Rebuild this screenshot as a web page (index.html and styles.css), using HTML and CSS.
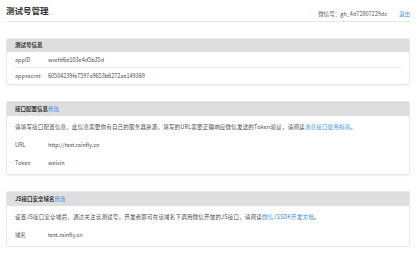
FILE: index.html
```html
<!DOCTYPE html>
<html lang="zh-CN">
<head>
<meta charset="UTF-8">
<meta name="viewport" content="width=device-width, initial-scale=1.0">
<title>测试号管理</title>
<link rel="stylesheet" href="styles.css">
</head>
<body>

<div class="page">

    <div class="top">
        <h1>测试号管理</h1>
        <div class="account">微信号：gh_4d72807229dc<a href="#" class="logout">退出</a></div>
    </div>

    <div class="panel panel-info">
        <div class="panel-head">测试号信息</div>
        <div class="panel-body">
            <div class="row line"><span class="label">appID</span><span class="value">wxcfd6d103e4d5b35d</span></div>
            <div class="row"><span class="label">appsecret</span><span class="value">60504239fe7597a9653b6272ae149369</span></div>
        </div>
    </div>

    <div class="panel">
        <div class="panel-head">接口配置信息<a href="#">修改</a></div>
        <div class="panel-body">
            <div class="row desc">请填写接口配置信息，此信息需要你有自己的服务器资源，填写的URL需要正确响应微信发送的Token验证，请阅读<a href="#">消息接口使用指南</a>。</div>
            <div class="row"><span class="label">URL</span><span class="value">http://test.rainfly.cn</span></div>
            <div class="row"><span class="label">Token</span><span class="value">weixin</span></div>
        </div>
    </div>

    <div class="panel">
        <div class="panel-head">JS接口安全域名<a href="#">修改</a></div>
        <div class="panel-body">
            <div class="row desc">设置JS接口安全域后，通过关注该测试号，开发者即可在该域名下调用微信开放的JS接口，请阅读<a href="#">微信JSSDK开发文档</a>。</div>
            <div class="row"><span class="label">域名</span><span class="value">test.rainfly.cn</span></div>
        </div>
    </div>

</div>

</body>
</html>
```

FILE: styles.css
```css
*{
    margin:0;
    padding:0;
    box-sizing:border-box;
}

body{
    background:#fff;
    font-family:"Noto Sans CJK SC","Noto Sans",sans-serif;
    font-size:5.5px;
    color:#4a4a4a;
}

a{
    color:#3d8fe0;
    text-decoration:none;
}

.page{
    width:404px;
    margin-left:6px;
}

.top{
    display:flex;
    justify-content:space-between;
    align-items:flex-start;
    height:22px;
    border-bottom:1px solid #e6e6e6;
    padding-top:4px;
}

h1{
    font-size:8.5px;
    font-weight:bold;
    color:#333;
    line-height:12px;
}

.account{
    margin-top:6px;
    color:#555;
}

.logout{
    margin-left:12px;
}

.panel{
    margin-top:16px;
    border:1px solid #e8e8e8;
    border-radius:2px;
    box-shadow:0 1px 2px rgba(0,0,0,.06);
}

.panel-head{
    background:#dedede;
    height:14px;
    line-height:14px;
    padding-left:8px;
    font-weight:bold;
    color:#333;
}

.panel-head a{
    font-weight:normal;
}

.panel-body{
    padding:2px 8px;
}

.row{
    height:18px;
    line-height:18px;
    display:flex;
}

.desc{
    display:block;
    letter-spacing:0.2px;
}

.panel-info .panel-head{
    height:13px;
    line-height:13px;
}

.panel-info .panel-body{
    padding:0 8px;
}

.panel-info .row{
    height:16px;
    line-height:16px;
}

.line{
    border-bottom:1px solid #eee;
}

.label{
    width:33px;
    color:#555;
}

.value{
    color:#4a4a4a;
}
```
